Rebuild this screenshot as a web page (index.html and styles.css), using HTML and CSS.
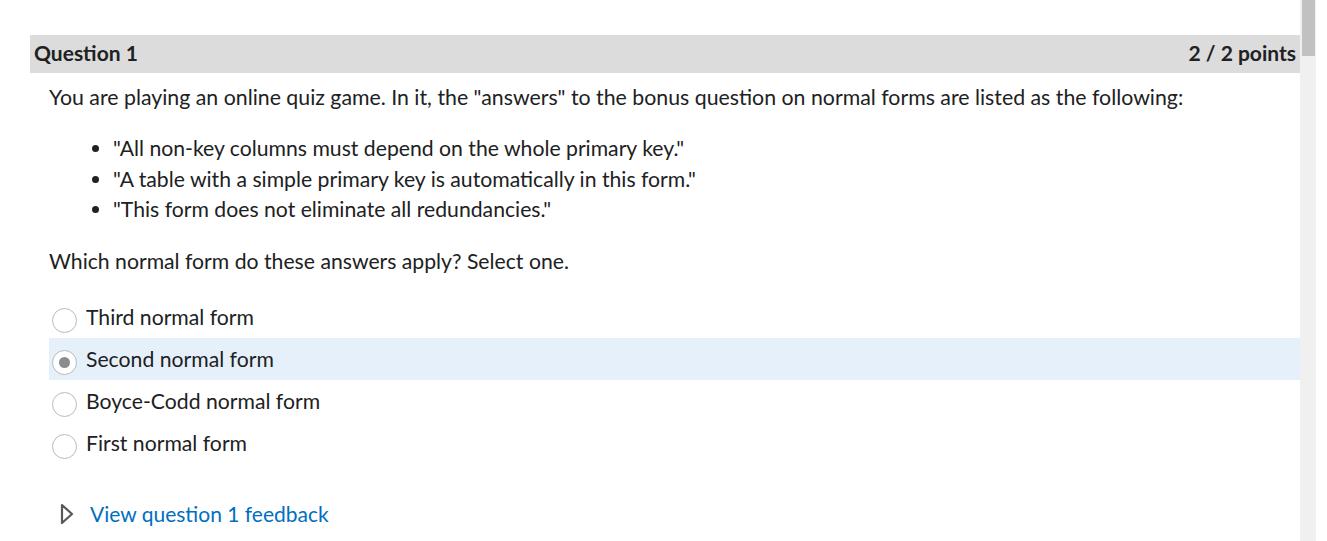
FILE: index.html
```html
<!DOCTYPE html>
<html>
<head>
<meta charset="utf-8">
<link rel="stylesheet" href="styles.css">
</head>
<body>
<div class="page">
  <div class="main">
    <div class="qhead">
      <span class="qtitle">Question 1</span>
      <span class="qpoints">2 / 2 points</span>
    </div>
    <div class="qbody">
      <p class="prompt">You are playing an online quiz game. In it, the "answers" to the bonus question on normal forms are listed as the following:</p>
      <ul class="clues">
        <li>"All non-key columns must depend on the whole primary key."</li>
        <li>"A table with a simple primary key is automatically in this form."</li>
        <li>"This form does not eliminate all redundancies."</li>
      </ul>
      <p class="ask">Which normal form do these answers apply? Select one.</p>
      <div class="options">
        <div class="option"><span class="radio"></span><span class="label">Third normal form</span></div>
        <div class="option selected"><span class="radio checked"></span><span class="label">Second normal form</span></div>
        <div class="option"><span class="radio"></span><span class="label">Boyce-Codd normal form</span></div>
        <div class="option"><span class="radio"></span><span class="label">First normal form</span></div>
      </div>
      <div class="feedback">
        <svg class="tri" width="14" height="22" viewBox="0 0 14 22"><path d="M2 2 L12 11 L2 20 Z" fill="none" stroke="#565a5c" stroke-width="2.2" stroke-linejoin="round"/></svg>
        <a class="fblink" href="#">View question 1 feedback</a>
      </div>
    </div>
  </div>
  <div class="scrollbar"><div class="thumb"></div></div>
</div>
</body>
</html>
```
FILE: styles.css
```css
html, body {
  margin: 0;
  padding: 0;
  background: #fff;
}
body {
  font-family: Lato, "Open Sans", sans-serif;
  color: #202122;
  overflow: hidden;
}
.page {
  display: flex;
  height: 541px;
}
.main {
  width: 1270px;
  padding-left: 30px;
  padding-top: 35px;
}
.scrollbar {
  width: 16px;
  background: #f0f0f0;
  height: 541px;
  padding: 0 1px 0 2px;
  box-sizing: border-box;
}
.thumb {
  height: 56px;
  background: #c1c1c1;
}
.qhead {
  height: 38px;
  box-sizing: border-box;
  background: #dcdcdc;
  display: flex;
  justify-content: space-between;
  align-items: center;
  padding: 0 4px 3px;
  font-weight: 700;
  font-size: 21px;
  line-height: 30px;
}
.qbody {
  padding-left: 19px;
}
.prompt {
  margin: 9px 0 0;
  font-size: 21.3px;
  line-height: 30px;
}
.clues {
  margin: 21px 0 0;
  padding-left: 64px;
  font-size: 21.2px;
  line-height: 30.5px;
}
.ask {
  margin: 21px 0 0;
  font-size: 21.2px;
  line-height: 30px;
}
.options {
  margin-top: 20px;
}
.option {
  height: 42px;
  display: flex;
  align-items: flex-start;
  font-size: 21.2px;
}
.option.selected {
  background: #e6f0fa;
}
.radio {
  width: 25px;
  height: 25px;
  border: 1.5px solid #b9bbbd;
  border-radius: 50%;
  background: #fff;
  margin: 12px 9px 0 3px;
  flex: none;
  display: flex;
  align-items: center;
  justify-content: center;
  box-sizing: border-box;
}
.radio.checked::after {
  content: "";
  width: 11px;
  height: 11px;
  border-radius: 50%;
  background: #8a8c8f;
}
.label {
  line-height: 42px;
}
.feedback {
  margin-top: 38px;
  display: flex;
  align-items: center;
  height: 24px;
}
.tri {
  margin-left: 11px;
  margin-right: 16px;
}
.fblink {
  color: #006fbf;
  text-decoration: none;
  font-size: 21px;
}
```
